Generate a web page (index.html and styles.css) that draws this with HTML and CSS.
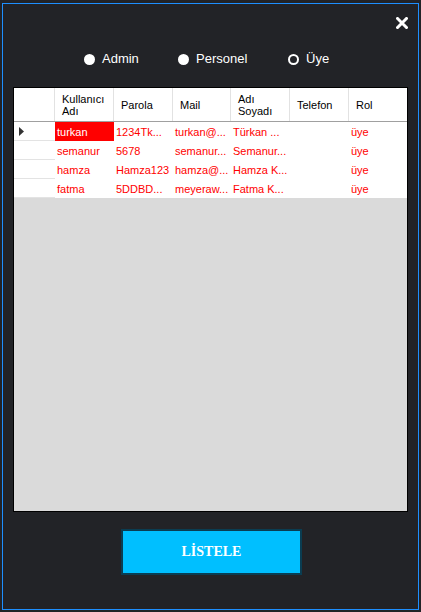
FILE: index.html
```html
<!DOCTYPE html>
<html>
<head>
<meta charset="utf-8">
<link rel="stylesheet" href="styles.css">
</head>
<body>
<div class="frame">
  <div class="topbar">
    <svg class="close" width="12" height="12" viewBox="0 0 12 12"><path d="M1.5 1.5 L10.5 10.5 M10.5 1.5 L1.5 10.5" stroke="#fff" stroke-width="3" stroke-linecap="square"/></svg>
  </div>
  <div class="radios">
    <div class="radio r-admin"><span class="dot"></span><span class="lbl">Admin</span></div>
    <div class="radio r-pers"><span class="dot"></span><span class="lbl">Personel</span></div>
    <div class="radio"><span class="dot ring"></span><span class="lbl">Üye</span></div>
  </div>
  <div class="grid">
    <div class="row head">
      <div class="hc"></div>
      <div class="hc">Kullanıcı<br>Adı</div>
      <div class="hc">Parola</div>
      <div class="hc">Mail</div>
      <div class="hc">Adı<br>Soyadı</div>
      <div class="hc">Telefon</div>
      <div class="hc last">Rol</div>
    </div>
    <div class="row">
      <div class="rh"><svg width="5" height="9" viewBox="0 0 5 9"><polygon points="0,0 5,4.5 0,9" fill="#333"/></svg></div>
      <div class="c sel">turkan</div><div class="c">1234Tk...</div><div class="c">turkan@...</div><div class="c">Türkan ...</div><div class="c"></div><div class="c">üye</div>
    </div>
    <div class="row">
      <div class="rh"></div>
      <div class="c">semanur</div><div class="c">5678</div><div class="c">semanur...</div><div class="c">Semanur...</div><div class="c"></div><div class="c">üye</div>
    </div>
    <div class="row">
      <div class="rh"></div>
      <div class="c">hamza</div><div class="c">Hamza123</div><div class="c">hamza@...</div><div class="c">Hamza K...</div><div class="c"></div><div class="c">üye</div>
    </div>
    <div class="row">
      <div class="rh"></div>
      <div class="c">fatma</div><div class="c">5DDBD...</div><div class="c">meyeraw...</div><div class="c">Fatma K...</div><div class="c"></div><div class="c">üye</div>
    </div>
  </div>
  <div class="btnrow"><div class="btn">LİSTELE</div></div>
</div>
</body>
</html>
```
FILE: styles.css
```css
html, body {
  margin: 0;
  padding: 0;
  background: #222327;
  width: 421px;
  height: 612px;
  overflow: hidden;
}
.frame {
  box-sizing: border-box;
  margin: 3px 0 0 2px;
  width: 417px;
  height: 607px;
  border: 1px solid #1e8fff;
  display: flex;
  flex-direction: column;
  font-family: "Liberation Sans", Arial, sans-serif;
}
.topbar {
  display: flex;
  justify-content: flex-end;
  padding-right: 10px;
  margin-top: 13px;
  height: 12px;
}
.close { display: block; }
.radios {
  display: flex;
  margin-top: 24px;
  margin-left: 81px;
  height: 12px;
  align-items: center;
}
.radio {
  display: flex;
  align-items: center;
  color: #fff;
  font-size: 13px;
  line-height: 12px;
}
.r-admin { width: 94px; }
.r-pers { width: 110px; }
.dot {
  width: 11px;
  height: 11px;
  border-radius: 50%;
  background: #fff;
  box-sizing: border-box;
  margin-right: 7px;
}
.dot.ring {
  background: transparent;
  border: 2px solid #fff;
}
.grid {
  box-sizing: border-box;
  margin-top: 22px;
  margin-left: 10px;
  width: 395px;
  height: 425px;
  border: 1px solid #000;
  background: #dadada;
  display: flex;
  flex-direction: column;
  font-size: 11px;
}
.row {
  display: grid;
  grid-template-columns: 41px 59px 59px 58px 59px 59px 1fr;
  height: 19px;
  background: #fff;
}
.row.head {
  height: 34px;
  box-sizing: border-box;
  border-bottom: 1px solid #a0a0a0;
}
.hc {
  border-right: 1px solid #e2e2e2;
  color: #000;
  display: flex;
  align-items: center;
  padding-left: 7px;
  line-height: 12px;
}
.hc.last { border-right: none; }
.rh {
  box-sizing: border-box;
  border-bottom: 1px solid #e3e3e3;
  display: flex;
  align-items: center;
  padding-left: 5px;
}
.c {
  color: #ff0000;
  display: flex;
  align-items: center;
  padding-left: 2px;
  white-space: nowrap;
  overflow: visible;
}
.c.sel {
  background: #ff0000;
  color: #fff;
}
.btnrow {
  margin-top: 17px;
  padding-left: 118px;
}
.btn {
  box-sizing: border-box;
  width: 181px;
  height: 46px;
  background: #00bfff;
  border: 2px solid #0a3d52;
  color: #fff;
  font-family: "Liberation Serif", "Times New Roman", serif;
  font-weight: bold;
  font-size: 14px;
  display: flex;
  align-items: center;
  justify-content: center;
}
```
